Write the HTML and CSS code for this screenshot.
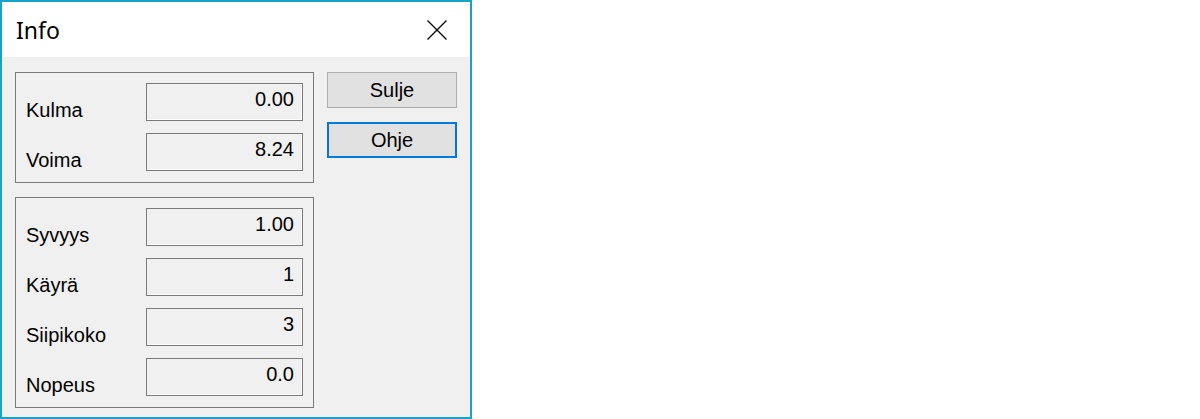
FILE: index.html
```html
<!DOCTYPE html>
<html>
<head>
<meta charset="utf-8">
<link rel="stylesheet" href="styles.css">
</head>
<body>
<div class="window">
  <div class="titlebar">
    <span class="title">Info</span>
    <span class="close">
      <svg width="20" height="20" viewBox="0 0 20 20"><path d="M0.5 0.5 L19.5 19.5 M19.5 0.5 L0.5 19.5" stroke="#000" stroke-width="1.3" fill="none"/></svg>
    </span>
  </div>
  <div class="content">
    <div class="groups">
      <div class="group">
        <div class="row"><span class="label">Kulma</span><span class="field">0.00</span></div>
        <div class="row"><span class="label">Voima</span><span class="field">8.24</span></div>
      </div>
      <div class="group">
        <div class="row"><span class="label">Syvyys</span><span class="field">1.00</span></div>
        <div class="row"><span class="label">Käyrä</span><span class="field">1</span></div>
        <div class="row"><span class="label">Siipikoko</span><span class="field">3</span></div>
        <div class="row"><span class="label">Nopeus</span><span class="field">0.0</span></div>
      </div>
    </div>
    <div class="buttons">
      <button class="btn">Sulje</button>
      <button class="btn btn-focus">Ohje</button>
    </div>
  </div>
</div>
</body>
</html>
```

FILE: styles.css
```css
html, body {
  margin: 0;
  padding: 0;
  background: #ffffff;
}
.window {
  width: 472px;
  height: 419px;
  box-sizing: border-box;
  border: 2px solid #18a2c4;
  display: flex;
  flex-direction: column;
  background: #f0f0f0;
}
.titlebar {
  height: 55px;
  flex: none;
  background: #ffffff;
  display: flex;
  align-items: center;
  justify-content: space-between;
  padding: 0 23px 0 14px;
}
.title {
  font-family: "Noto Sans", "Open Sans", sans-serif;
  font-size: 23px;
  color: #000;
}
.close {
  display: flex;
  width: 20px;
  height: 20px;
  margin-top: 1px;
}
.content {
  flex: 1;
  display: flex;
  align-items: flex-start;
  padding: 15px 0 0 13px;
  gap: 13px;
  font-family: "Liberation Sans", Arial, sans-serif;
  font-size: 20px;
  color: #000;
}
.groups {
  display: flex;
  flex-direction: column;
  gap: 14px;
}
.group {
  width: 299px;
  box-sizing: border-box;
  border: 1px solid #7a7a7a;
  padding: 10px 10px 11px 10px;
  display: flex;
  flex-direction: column;
  gap: 12px;
}
.row {
  display: flex;
  height: 38px;
}
.label {
  width: 120px;
  line-height: 23px;
  padding-top: 16px;
  box-sizing: border-box;
}
.field {
  width: 157px;
  height: 38px;
  box-sizing: border-box;
  border: 1px solid #7a7a7a;
  box-shadow: inset -1px -1px 0 #ffffff;
  text-align: right;
  line-height: 23px;
  padding: 4px 8px 0 0;
}
.buttons {
  display: flex;
  flex-direction: column;
  gap: 14px;
}
.btn {
  width: 130px;
  height: 36px;
  box-sizing: border-box;
  background: #e1e1e1;
  border: 1px solid #adadad;
  font-family: "Liberation Sans", Arial, sans-serif;
  font-size: 20px;
  color: #000;
  padding: 0;
  margin: 0;
  line-height: 23px;
}
.btn-focus {
  border: 2px solid #0078d7;
}
```
